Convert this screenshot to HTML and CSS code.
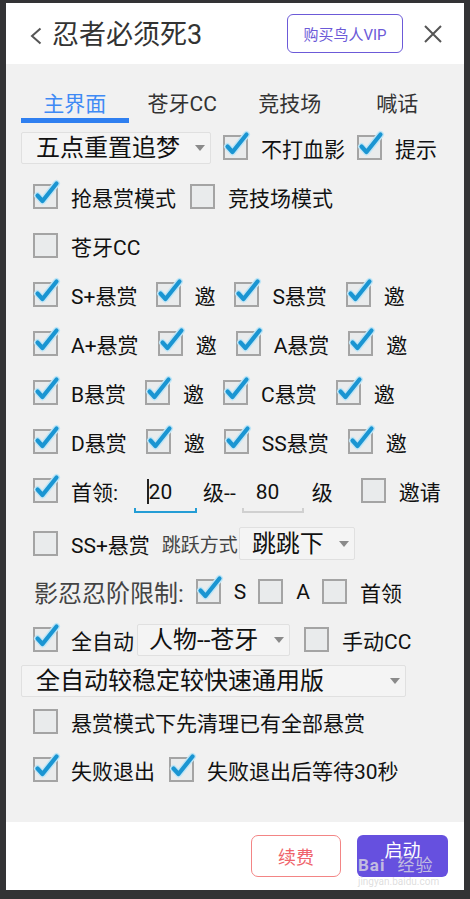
FILE: index.html
```html
<!DOCTYPE html>
<html lang="zh-CN">
  <head>
    <meta charset="UTF-8" />
    <title>忍者必须死3</title>
    <link rel="stylesheet" href="styles.css">
  </head>
  <body>
    <!-- shared check mark -->
    <svg class="defs" aria-hidden="true">
      <symbol id="tick" viewBox="0 0 21 21" overflow="visible">
        <polyline points="2.5,9.5 7.5,15 21.5,-2.5" fill="none" stroke="#bfe5f6" stroke-width="7" stroke-linecap="round" stroke-linejoin="round" />
        <polyline points="2.5,9.5 7.5,15 21.5,-2.5" fill="none" stroke="#1a95d2" stroke-width="4.2" stroke-linecap="round" stroke-linejoin="round" />
      </symbol>
    </svg>

    <div class="panel">
      <header class="top">
        <svg class="back" viewBox="0 0 12 18">
          <polyline points="10.5,1.5 2,9 10.5,16.5" fill="none" stroke="#555" stroke-width="2" />
        </svg>
        <h1 class="title">忍者必须死3</h1>
        <button class="vip">购买鸟人VIP</button>
        <svg class="close" viewBox="0 0 18 18">
          <path d="M1 1 L17 17 M17 1 L1 17" stroke="#555" stroke-width="2" />
        </svg>
      </header>

      <main class="body">
        <nav class="tabs">
          <div class="tab active">主界面</div>
          <div class="tab">苍牙CC</div>
          <div class="tab">竞技场</div>
          <div class="tab">喊话</div>
        </nav>

        <div class="row r1">
          <div class="sel w190">五点重置追梦</div>
          <label class="opt"><span class="cb"><svg><use href="#tick" /></svg></span>不打血影</label>
          <label class="opt"><span class="cb"><svg><use href="#tick" /></svg></span>提示</label>
        </div>

        <div class="row ind">
          <label class="opt"><span class="cb"><svg><use href="#tick" /></svg></span>抢悬赏模式</label>
          <label class="opt"><span class="cb"></span>竞技场模式</label>
        </div>

        <div class="row ind">
          <label class="opt"><span class="cb"></span>苍牙CC</label>
        </div>

        <div class="row ind wide">
          <label class="opt"><span class="cb"><svg><use href="#tick" /></svg></span>S+悬赏</label>
          <label class="opt"><span class="cb"><svg><use href="#tick" /></svg></span>邀</label>
          <label class="opt"><span class="cb"><svg><use href="#tick" /></svg></span>S悬赏</label>
          <label class="opt"><span class="cb"><svg><use href="#tick" /></svg></span>邀</label>
        </div>

        <div class="row ind wide">
          <label class="opt"><span class="cb"><svg><use href="#tick" /></svg></span>A+悬赏</label>
          <label class="opt"><span class="cb"><svg><use href="#tick" /></svg></span>邀</label>
          <label class="opt"><span class="cb"><svg><use href="#tick" /></svg></span>A悬赏</label>
          <label class="opt"><span class="cb"><svg><use href="#tick" /></svg></span>邀</label>
        </div>

        <div class="row ind wide">
          <label class="opt"><span class="cb"><svg><use href="#tick" /></svg></span>B悬赏</label>
          <label class="opt"><span class="cb"><svg><use href="#tick" /></svg></span>邀</label>
          <label class="opt"><span class="cb"><svg><use href="#tick" /></svg></span>C悬赏</label>
          <label class="opt"><span class="cb"><svg><use href="#tick" /></svg></span>邀</label>
        </div>

        <div class="row ind wide">
          <label class="opt"><span class="cb"><svg><use href="#tick" /></svg></span>D悬赏</label>
          <label class="opt"><span class="cb"><svg><use href="#tick" /></svg></span>邀</label>
          <label class="opt"><span class="cb"><svg><use href="#tick" /></svg></span>SS悬赏</label>
          <label class="opt"><span class="cb"><svg><use href="#tick" /></svg></span>邀</label>
        </div>

        <div class="row ind lv">
          <label class="opt"><span class="cb"><svg><use href="#tick" /></svg></span>首领:</label>
          <div class="num focus"><span class="caret"></span>20</div>
          <span class="txt">级--</span>
          <div class="num">80</div>
          <span class="txt lvl">级</span>
          <label class="opt far"><span class="cb"></span>邀请</label>
        </div>

        <div class="row ind r9">
          <label class="opt"><span class="cb"></span>SS+悬赏</label>
          <span class="small">跳跃方式</span>
          <div class="sel w116 tight">跳跳下</div>
        </div>

        <div class="row ind r10">
          <span class="big">影忍忍阶限制:</span>
          <label class="opt"><span class="cb"><svg><use href="#tick" /></svg></span>S</label>
          <label class="opt"><span class="cb"></span>A</label>
          <label class="opt"><span class="cb"></span>首领</label>
        </div>

        <div class="row ind">
          <label class="opt"><span class="cb"><svg><use href="#tick" /></svg></span>全自动</label>
          <div class="sel w153 tight">人物--苍牙</div>
          <label class="opt"><span class="cb"></span>手动CC</label>
        </div>

        <div class="row r12">
          <div class="sel w385">全自动较稳定较快速通用版</div>
        </div>

        <div class="row ind r13">
          <label class="opt"><span class="cb"></span>悬赏模式下先清理已有全部悬赏</label>
        </div>

        <div class="row ind">
          <label class="opt"><span class="cb"><svg><use href="#tick" /></svg></span>失败退出</label>
          <label class="opt"><span class="cb"><svg><use href="#tick" /></svg></span>失败退出后等待30秒</label>
        </div>
      </main>

      <footer class="bottom">
        <button class="renew">续费</button>
        <button class="start">启动</button>
        <!-- watermark from the original screenshot -->
        <div class="mark">Bai<span>经验</span></div>
        <div class="mark-url">jingyan.baidu.com</div>
      </footer>
    </div>
  </body>
</html>
```

FILE: styles.css
```css
/* General */
body {
  margin: 0;
  background: #333335;
  font-family: Roboto, "Noto Sans CJK SC", sans-serif;
  color: #111;
}

.defs {
  display: block;
  width: 0;
  height: 0;
  overflow: hidden;
}

.panel {
  width: 458px;
  height: 887px;
  margin: 3px 6px 0;
  background: #fff;
  display: flex;
  flex-direction: column;
}

/* Header */
.top {
  height: 61px;
  flex: none;
  display: flex;
  align-items: center;
  padding: 0 22px 0 24px;
}

.back {
  width: 12px;
  height: 18px;
  margin-top: 4px;
}

.title {
  margin: 4px 0 0 10px;
  font-size: 27px;
  font-weight: normal;
  color: #333;
  line-height: 1;
}

.vip {
  margin-left: auto;
  width: 116px;
  height: 39px;
  border: 1.5px solid #6c5ad8;
  border-radius: 6px;
  background: #fff;
  color: #6c5ad8;
  font-family: inherit;
  font-size: 15px;
  padding: 0;
}

.close {
  width: 18px;
  height: 18px;
  margin-left: 21px;
}

/* Body */
.body {
  height: 758px;
  flex: none;
  box-sizing: border-box;
  background: #f1f1f1;
  padding: 20px 13px 0 15px;
}

.tabs {
  display: grid;
  grid-template-columns: repeat(4, 107.5px);
  height: 39px;
}

.tab {
  box-sizing: border-box;
  height: 39px;
  padding-top: 6px;
  line-height: 28px;
  text-align: center;
  font-size: 21px;
  color: #333;
}

.tab.active {
  color: #3f8af5;
  border-bottom: 5px solid #2f7ff0;
}

.row {
  display: flex;
  align-items: center;
  height: 49px;
  gap: 14px;
  font-size: 21px;
  white-space: nowrap;
}

.row.r1 {
  gap: 12px;
}

.row.ind {
  padding-left: 12px;
}

.row.wide {
  gap: 19px;
}

.row.r9 {
  margin-top: 4px;
  gap: 12px;
}

.row.r10 {
  height: 47px;
  gap: 12px;
}

.row.r12 {
  height: 34px;
}

.row.r13 {
  height: 47px;
}

/* Checkbox */
.opt {
  display: flex;
  align-items: center;
  gap: 13px;
}

.cb {
  flex: none;
  width: 25px;
  height: 25px;
  box-sizing: border-box;
  border: 2px solid #a4a4a4;
  background: #e9ebec;
}

.cb svg {
  display: block;
  width: 21px;
  height: 21px;
  overflow: visible;
}

/* Dropdown */
.sel {
  display: flex;
  align-items: center;
  justify-content: space-between;
  box-sizing: border-box;
  height: 32px;
  padding: 0 5px 0 14px;
  background: #f4f4f4;
  border: 1px solid #e0e0e0;
  border-radius: 2px;
  font-size: 24px;
  line-height: 1;
  color: #111;
}

.sel::after {
  content: "";
  border-left: 5.5px solid transparent;
  border-right: 5.5px solid transparent;
  border-top: 6px solid #8a8a8a;
}

.w190 { width: 190px; }
.w116 { width: 116px; height: 33px; padding-left: 12px; }
.w153 { width: 153px; padding-left: 11px; }
.w385 { width: 385px; }

.sel.tight {
  margin-left: -11px;
}

/* Level inputs */
.row.lv {
  gap: 6px;
}

.num {
  box-sizing: border-box;
  width: 62px;
  height: 36px;
  margin-top: 8px;
  padding: 0 0 6px 14px;
  display: flex;
  align-items: center;
  background:
    linear-gradient(#d0d0d0, #d0d0d0) left bottom / 100% 2px no-repeat,
    linear-gradient(#d0d0d0, #d0d0d0) left bottom / 2px 5px no-repeat,
    linear-gradient(#d0d0d0, #d0d0d0) right bottom / 2px 5px no-repeat;
}

.num.focus {
  width: 63px;
  margin-left: 10px;
  padding-left: 13px;
  background:
    linear-gradient(#249dd5, #249dd5) left bottom / 100% 2px no-repeat,
    linear-gradient(#249dd5, #249dd5) left bottom / 2px 5px no-repeat,
    linear-gradient(#249dd5, #249dd5) right bottom / 2px 5px no-repeat;
}

.caret {
  width: 1.5px;
  height: 25px;
  background: #222;
}

.txt.lvl {
  margin-left: 2px;
}

.opt.far {
  margin-left: 22px;
}

.small {
  font-size: 19px;
  color: #444;
}

.big {
  font-size: 24px;
  color: #444;
  margin-left: 1px;
}

/* Footer */
.bottom {
  position: relative;
  flex: 1;
  display: flex;
  justify-content: flex-end;
  align-items: flex-start;
  gap: 16px;
  padding: 13px 16px 0 0;
}

.bottom button {
  height: 42px;
  font-family: inherit;
  font-size: 18px;
  padding: 0;
}

.renew {
  width: 90px;
  border: 1.5px solid #f38585;
  border-radius: 7px;
  background: #fff;
  color: #ef636a;
}

.start {
  width: 91px;
  border: none;
  border-radius: 6px;
  background: #6650df;
  color: #fff;
  padding-bottom: 14px !important;
}

.mark {
  position: absolute;
  left: 352px;
  top: 35px;
  font-size: 17px;
  line-height: 16px;
  font-weight: bold;
  color: rgba(225, 225, 225, 0.75);
  letter-spacing: 1px;
}

.mark span {
  margin-left: 12px;
  font-weight: normal;
}

.mark-url {
  position: absolute;
  left: 352px;
  top: 55px;
  font-size: 10px;
  line-height: 10px;
  color: rgba(200, 200, 200, 0.6);
}
```
